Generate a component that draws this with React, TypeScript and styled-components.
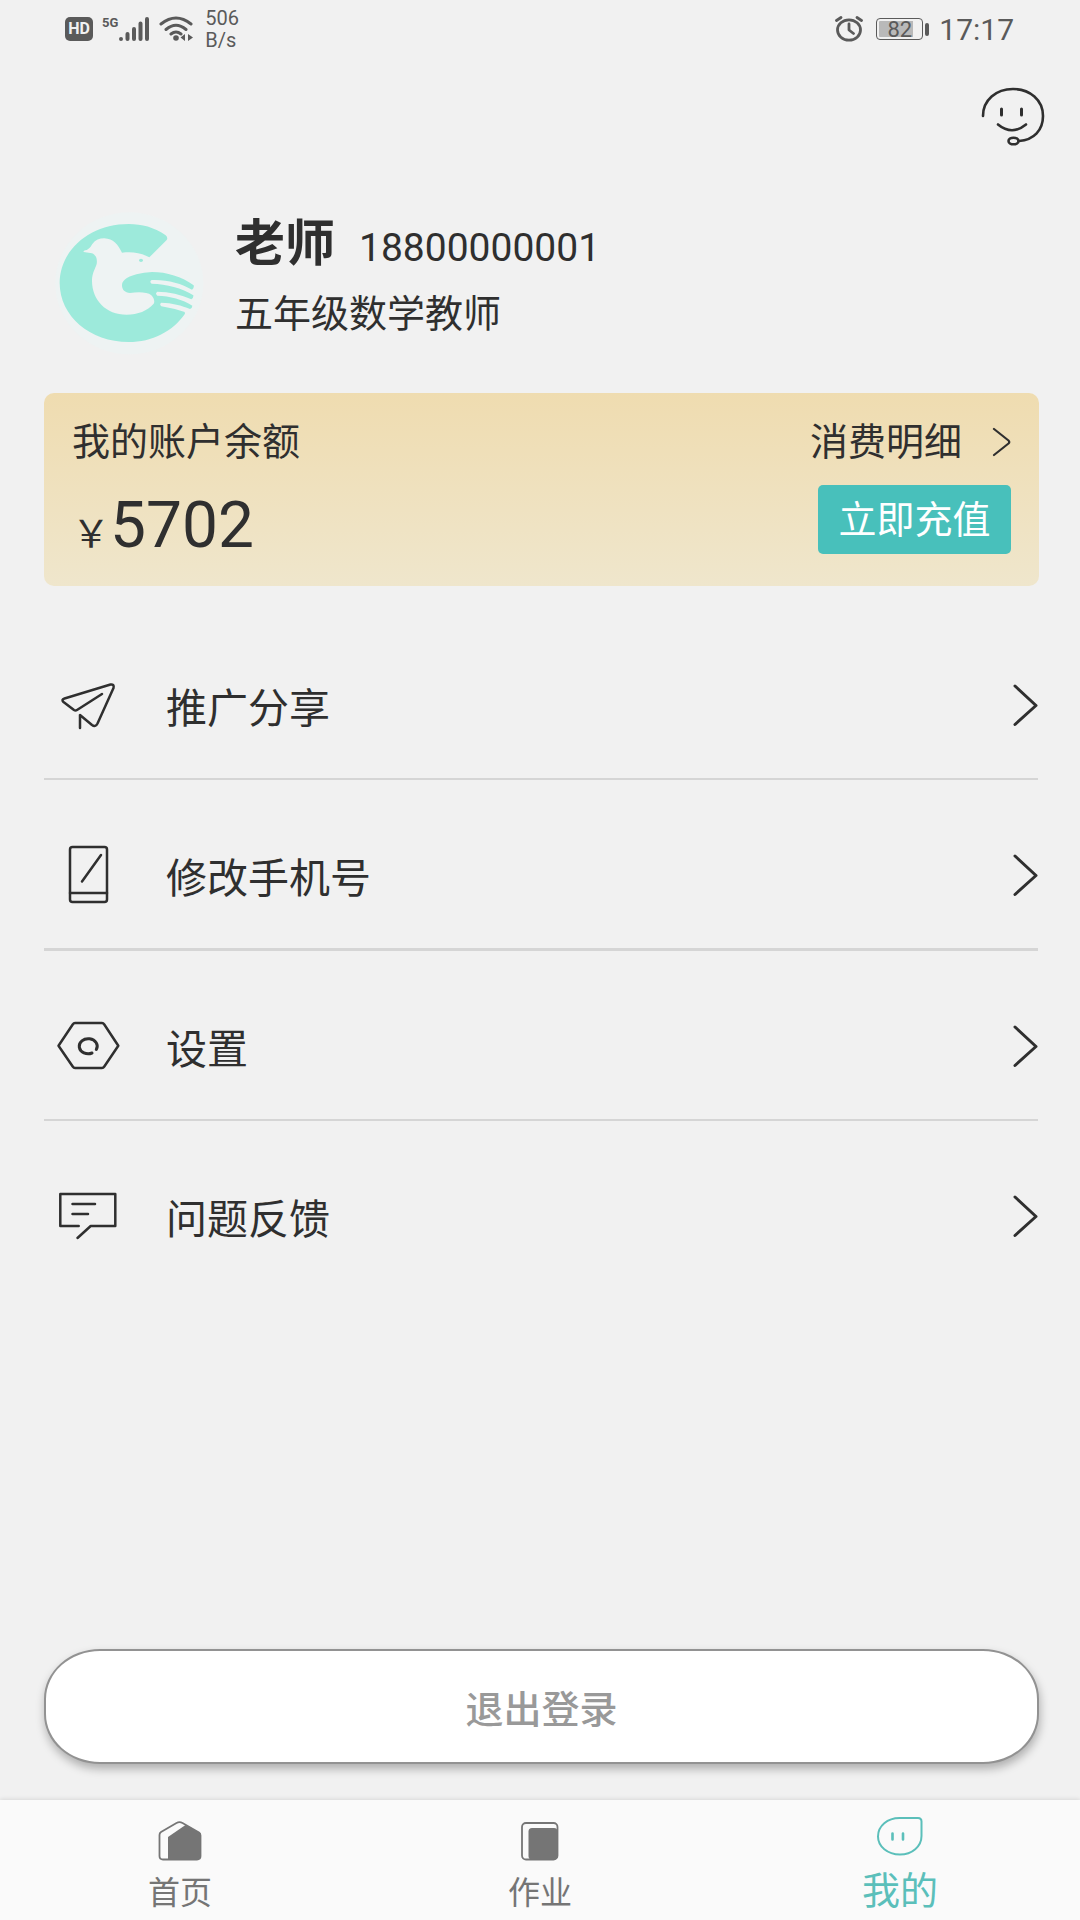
import React from "react";
import styled, { createGlobalStyle } from "styled-components";

const GlobalStyle = createGlobalStyle`
  * { box-sizing: border-box; }
  body {
    margin: 0;
    background: #f1f1f1;
    color: #2f2f2f;
    font-family: Roboto, "Noto Sans CJK SC", sans-serif;
    font-size: 38px;
  }
  button {
    margin: 0;
    padding: 0;
    border: 0;
    background: none;
    color: inherit;
    font: inherit;
    cursor: pointer;
  }
  a { color: inherit; text-decoration: none; }
  svg { display: block; flex: none; }
  h1, p, ul { margin: 0; padding: 0; }
`;

const Page = styled.div`
  min-height: 100vh;
  display: flex;
  flex-direction: column;
`;

const StatusBar = styled.div`
  display: flex;
  justify-content: space-between;
  align-items: center;
  height: 58px;
  padding: 0 66px 0 65px;
  color: #5a5a5a;
`;

const StatusGroup = styled.div<{ $gap: number }>`
  display: flex;
  align-items: center;
  gap: ${(p) => p.$gap}px;
`;

const HdBadge = styled.span`
  width: 28px;
  height: 24px;
  border-radius: 5px;
  background: #5a5a5a;
  color: #f1f1f1;
  font-size: 16px;
  font-weight: 700;
  line-height: 24px;
  text-align: center;
`;

const Signal = styled.span`
  display: flex;
  align-items: flex-start;
`;

const NetworkType = styled.span`
  font-size: 13px;
  font-weight: 700;
  line-height: 14px;
`;

const Speed = styled.span`
  display: flex;
  flex-direction: column;
  margin-left: 3px;
  font-size: 20px;
  line-height: 22px;
`;

const Battery = styled.span`
  display: flex;
  align-items: center;
  gap: 2px;
  margin-left: 3px;
  &::after {
    content: "";
    width: 4px;
    height: 13px;
    border-radius: 2px;
    background: #5a5a5a;
  }
`;

const BatteryCell = styled.span`
  width: 47px;
  height: 22px;
  border: 1px solid #5a5a5a;
  border-radius: 4px;
  padding: 2px;
  background: linear-gradient(90deg, #b9b9b9 82%, transparent 82%) content-box;
  font-size: 22px;
  line-height: 18px;
  text-align: center;
`;

const Clock = styled.time`
  font-size: 30px;
`;

const Header = styled.header`
  display: flex;
  justify-content: flex-end;
  padding: 28px 35px 0 44px;
`;

const Profile = styled.section`
  display: flex;
  align-items: center;
  gap: 25px;
  padding: 64px 42px 0 50px;
`;

const ProfileText = styled.div`
  display: flex;
  flex-direction: column;
  gap: 10px;
  padding-bottom: 22px;
`;

const NameLine = styled.div`
  display: flex;
  align-items: baseline;
  gap: 24px;
  line-height: 56px;
`;

const Name = styled.h1`
  font-size: 50px;
  font-weight: 700;
`;

const Phone = styled.span`
  font-size: 39px;
`;

const Subtitle = styled.p`
  line-height: 56px;
`;

const Card = styled.section`
  margin: 23px 41px 0 44px;
  padding: 26px 28px 32px;
  border-radius: 10px;
  background: linear-gradient(#efdcb0, #efe6cc);
  display: flex;
  flex-direction: column;
  gap: 20px;
`;

const CardRow = styled.div<{ $align: string }>`
  display: flex;
  justify-content: space-between;
  align-items: ${(p) => p.$align};
  line-height: 46px;
`;

const DetailLink = styled.a`
  display: flex;
  align-items: center;
  gap: 30px;
`;

const Amount = styled.p`
  display: flex;
  align-items: baseline;
`;

const Currency = styled.span`
  font-family: "Noto Sans CJK SC", sans-serif;
  line-height: 38px;
`;

const AmountValue = styled.span`
  font-size: 64px;
  line-height: 56px;
`;

const TopUpButton = styled.button`
  width: 193px;
  height: 69px;
  border-radius: 5px;
  background: #48c0bb;
  color: #fff;
`;

const Menu = styled.ul`
  margin: 24px 42px 0 44px;
  list-style: none;
`;

const MenuItem = styled.li`
  border-bottom: 2px solid #d5d5d5;
  &:nth-child(2) { border-bottom-width: 3px; }
  &:last-child { border-bottom: 0; }
`;

const MenuLink = styled.a`
  display: flex;
  align-items: center;
  gap: 46px;
  height: 168px;
  padding: 22px 0 0 12px;
  font-size: 41px;
`;

const MenuLabel = styled.span`
  flex: 1;
`;

const LogoutButton = styled.button`
  margin: auto 41px 36px 44px;
  height: 115px;
  border: 2px solid #929292;
  border-radius: 56px / 50px;
  background: #fff;
  box-shadow: 1px 5px 10px rgba(0, 0, 0, 0.28);
  color: #999;
  font-weight: 500;
`;

const TabBar = styled.nav`
  display: flex;
  height: 120px;
  background: #fafafa;
  box-shadow: 0 -1px 4px rgba(0, 0, 0, 0.1);
`;

const Tab = styled.a<{ $active?: boolean }>`
  flex: 1;
  display: flex;
  flex-direction: column;
  align-items: center;
  justify-content: center;
  gap: 16px;
  padding-top: ${(p) => (p.$active ? 6 : 10)}px;
  color: ${(p) => (p.$active ? "#5bbfba" : "#757575")};
  font-size: ${(p) => (p.$active ? 38 : 32)}px;
  line-height: 1;
`;

const line = {
  fill: "none",
  stroke: "currentColor",
  strokeLinecap: "round" as const,
  strokeLinejoin: "round" as const,
};

const SignalIcon = () => (
  <svg width="32" height="26" viewBox="0 0 32 26" {...line} strokeWidth="4">
    <path d="M3 23v0M9.500 18v5M16 13v10M22.500 7.500v15.500M29 3v20" />
  </svg>
);

const WifiIcon = () => (
  <svg width="34" height="26" viewBox="0 0 34 26" {...line} strokeWidth="3">
    <path d="M2 8Q17-4 32 8M7 13.500Q17 5 27 13.500M12 18Q17 14 22 18" />
    <circle cx="17" cy="22" r="2.800" fill="currentColor" stroke="none" />
    <path d="M26 18v7l-4.500-3.500zM29 18v7l5-3.500z" fill="currentColor" stroke="none" />
  </svg>
);

const AlarmIcon = () => (
  <svg width="28" height="26" viewBox="0 0 28 26" {...line} strokeWidth="2.800">
    <ellipse cx="14" cy="14" rx="11.500" ry="10.200" />
    <path d="M14 8v6l4.500 3.500M1.500 4.500 6 1.500M26.500 4.500 22 1.500" />
  </svg>
);

const SupportIcon = () => (
  <svg width="64" height="60" viewBox="0 0 64 60" {...line} strokeWidth="2.600">
    <path d="M2 30C2 14 15 3 32 3C49 3 62 14 62 30C62 44 53 54 38 55" />
    <ellipse cx="32.500" cy="55" rx="5" ry="3.300" />
    <path d="M20.500 23v6M40.500 23v6" strokeWidth="3" />
    <path d="M17 38.500Q31 50 45 38.500" />
  </svg>
);

const AvatarLogo = () => (
  <svg width="160" height="160" viewBox="0 0 480 480" role="img" aria-label="头像">
    <ellipse cx="238" cy="220" rx="222" ry="213" fill="#eef3f3" />
    <path
      fill="#9deadb"
      d="M298 142L350 90Q355 82 346 75C312 52 276 42 236 42C120 42 29 120 29 219C29 318 120 396 236 396C307 396 368 364 405 311L404 306Q370 295 334 289Q327 282 334 278C365 278 396 287 420 297Q427 294 427 287C398 268 360 258 322 257Q314 250 322 245C356 245 394 254 424 268Q431 265 430 256C396 234 350 222 305 221Q297 215 305 210C350 208 394 220 426 239Q433 234 431 226C396 200 350 186 306 186C265 188 216 200 216 226C216 240 225 248 240 249C262 246 292 245 304 256C312 264 315 275 311 281C292 302 264 314 230 314C168 314 126 270 126 212C126 190 135 178 140 162C142 148 140 136 126 130L101 126Q99 122 106 121C118 118 122 110 127 102C136 90 148 85 163 85C190 86 204 104 216 128C246 124 272 128 298 142Z"
    />
    <ellipse cx="273" cy="151" rx="6" ry="5" fill="#9deadb" />
  </svg>
);

const SmallChevron = () => (
  <svg width="19" height="30" viewBox="0 0 19 30" {...line} strokeWidth="2.200">
    <path d="M2 2L16.500 13.500Q18 15 16.500 16.500L2 28" />
  </svg>
);

const Chevron = () => (
  <svg width="26" height="44" viewBox="0 0 26 44" {...line} strokeWidth="3">
    <path d="M3 3L24 22.500L3 41.500" />
  </svg>
);

const MenuIcon = ({ children }: { children: React.ReactNode }) => (
  <svg width="64" height="60" viewBox="0 0 64 60" {...line} strokeWidth="2.500" aria-hidden="true">
    {children}
  </svg>
);

const menu = [
  {
    label: "推广分享",
    icon: (
      <path d="M46 19L21 35Q19.500 36 18 35L7.500 27Q5 24.500 8.500 23.500L54.500 9.500Q58.500 9 57.500 13L41.500 48.500Q39.500 52.500 36 50L24 40V53" />
    ),
  },
  {
    label: "修改手机号",
    icon: (
      <>
        <rect x="14" y="2" width="37" height="55" rx="2.500" />
        <path d="M14 48H51M45 10L26 36.500" />
      </>
    ),
  },
  {
    label: "设置",
    icon: (
      <>
        <path d="M2.500 29.700L16.700 8.500Q17.700 7 19 7H46Q47.300 7 48.300 8.500L62.300 29.700L48.300 50.500Q47.300 52 46 52H19Q17.700 52 16.700 50.500Z" />
        <path d="M40.300 33.500A9 7.500 0 1 0 36 37" strokeWidth="3" />
      </>
    ),
  },
  {
    label: "问题反馈",
    icon: <path d="M22.700 40H4.300V8H59.300V40H34.700L21.500 52M16.500 18H39M16.500 28H32" />,
  },
];

const HomeIcon = () => (
  <svg width="44" height="40" viewBox="0 0 44 40" {...line} strokeWidth="1.800">
    <path d="M1.500 14Q1.500 12 3 11L18.500 2Q21.500 .3 24.500 2L41 11.500Q42.500 12.500 42.500 14.500V35Q42.500 38.500 39 38.500H5Q1.500 38.500 1.500 35Z" />
    <path d="M10 16L27.500 4L41 11.500Q42.500 12.500 42.500 14.500V35Q42.500 38.500 39 38.500H10Z" fill="currentColor" stroke="none" />
  </svg>
);

const WorkIcon = () => (
  <svg width="44" height="40" viewBox="0 0 44 40" {...line} strokeWidth="1.800">
    <rect x="4" y="2" width="35.500" height="36.500" rx="4" />
    <rect x="10.500" y="7" width="29" height="31.500" rx="3.500" fill="currentColor" stroke="none" />
  </svg>
);

const MineIcon = () => (
  <svg width="46" height="40" viewBox="0 0 46 40" {...line} strokeWidth="2">
    <path d="M22.500 2H41Q44.500 2 44.500 5.500V20C44.500 30.500 35 38.500 23 38.500C10.500 38.500 1 30.500 1 20.500C1 10 10.500 2 22.500 2Z" />
    <path d="M15.500 17.500v6M26 17.500v6" strokeWidth="2.600" />
  </svg>
);

export default function App() {
  return (
    <Page>
      <GlobalStyle />
      <StatusBar>
        <StatusGroup $gap={9}>
          <HdBadge>HD</HdBadge>
          <Signal>
            <NetworkType>5G</NetworkType>
            <SignalIcon />
          </Signal>
          <WifiIcon />
          <Speed>
            <span>506</span>
            <span>B/s</span>
          </Speed>
        </StatusGroup>
        <StatusGroup $gap={10}>
          <AlarmIcon />
          <Battery>
            <BatteryCell>82</BatteryCell>
          </Battery>
          <Clock>17:17</Clock>
        </StatusGroup>
      </StatusBar>

      <Header>
        <button type="button" aria-label="客服">
          <SupportIcon />
        </button>
      </Header>

      <Profile>
        <AvatarLogo />
        <ProfileText>
          <NameLine>
            <Name>老师</Name>
            <Phone>18800000001</Phone>
          </NameLine>
          <Subtitle>五年级数学教师</Subtitle>
        </ProfileText>
      </Profile>

      <Card>
        <CardRow $align="center">
          <span>我的账户余额</span>
          <DetailLink href="#detail">
            消费明细
            <SmallChevron />
          </DetailLink>
        </CardRow>
        <CardRow $align="flex-end">
          <Amount>
            <Currency>{"\uFFE5"}</Currency>
            <AmountValue>5702</AmountValue>
          </Amount>
          <TopUpButton type="button">立即充值</TopUpButton>
        </CardRow>
      </Card>

      <Menu>
        {menu.map((item) => (
          <MenuItem key={item.label}>
            <MenuLink href="#menu">
              <MenuIcon>{item.icon}</MenuIcon>
              <MenuLabel>{item.label}</MenuLabel>
              <Chevron />
            </MenuLink>
          </MenuItem>
        ))}
      </Menu>

      <LogoutButton type="button">退出登录</LogoutButton>

      <TabBar>
        <Tab href="#home">
          <HomeIcon />
          首页
        </Tab>
        <Tab href="#work">
          <WorkIcon />
          作业
        </Tab>
        <Tab href="#mine" $active aria-current="page">
          <MineIcon />
          我的
        </Tab>
      </TabBar>
    </Page>
  );
}
